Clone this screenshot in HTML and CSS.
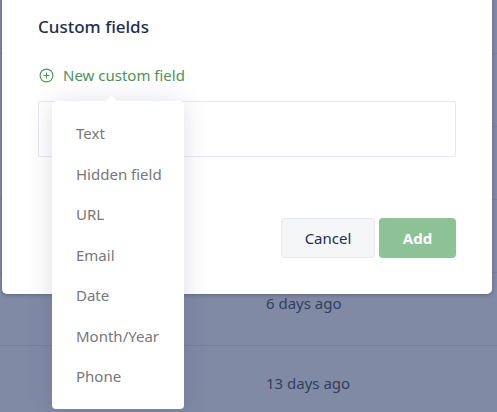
FILE: index.html
```html
<!DOCTYPE html>
<html lang="en">
<head>
    <meta charset="UTF-8">
    <meta name="viewport" content="width=device-width, initial-scale=1.0">
    <title>Custom fields</title>
    <link rel="stylesheet" href="styles.css">
</head>
<body>

    <!-- Table behind the overlay -->
    <div class="rows">
        <div class="row"></div>
        <div class="row"></div>
        <div class="row"></div>
        <div class="row"><span class="row-date first">6 days ago</span></div>
        <div class="row"><span class="row-date">13 days ago</span></div>
    </div>

    <div class="modal">
        <h2 class="modal-title">Custom fields</h2>
        <div class="new-field">
            <svg class="plus-icon" width="15" height="15" viewBox="0 0 15 15" fill="none" stroke="#4a9259" stroke-width="1.1">
                <circle cx="7.5" cy="7.5" r="6.4"/>
                <path d="M7.5 4.6v5.8M4.6 7.5h5.8"/>
            </svg>
            <span>New custom field</span>
        </div>
        <div class="fields-box"></div>
        <div class="modal-actions">
            <button class="btn btn-cancel">Cancel</button>
            <button class="btn btn-add">Add</button>
        </div>
    </div>

    <div class="dropdown">
        <div class="dropdown-item">Text</div>
        <div class="dropdown-item">Hidden field</div>
        <div class="dropdown-item">URL</div>
        <div class="dropdown-item">Email</div>
        <div class="dropdown-item">Date</div>
        <div class="dropdown-item">Month/Year</div>
        <div class="dropdown-item">Phone</div>
    </div>

</body>
</html>
```

FILE: styles.css
```css
html, body {
    height: 100%;
}

body {
    margin: 0;
    background: #808aa5;
    font-family: "Noto Sans", "Open Sans", Arial, sans-serif;
    overflow: hidden;
}

.rows {
    padding-top: 53px;
}

.row {
    height: 73px;
    border-top: 1px solid #747f9c;
    box-sizing: border-box;
    padding: 27px 0 0 266px;
    font-size: 15px;
    line-height: 20px;
    color: #323e5e;
}

.row-date.first {
    display: block;
    margin-top: -7px;
}

.modal {
    position: absolute;
    top: -10px;
    left: 2px;
    width: 490px;
    height: 304px;
    box-sizing: border-box;
    padding: 26px 36px 0 36px;
    background: #fff;
    border-radius: 5px;
    box-shadow: 0 1px 4px rgba(30, 40, 70, 0.35);
}

.modal-title {
    margin: 0;
    font-size: 17px;
    line-height: 22px;
    font-weight: 500;
    color: #1f2e50;
}

.new-field {
    display: flex;
    align-items: center;
    gap: 9px;
    margin-top: 27px;
    padding-left: 1px;
    font-size: 15px;
    line-height: 20px;
    color: #4a9259;
}

.fields-box {
    height: 54px;
    margin-top: 16px;
    border: 1px solid #e8e8f2;
    border-radius: 2px;
}

.modal-actions {
    display: flex;
    justify-content: flex-end;
    gap: 4px;
    margin-top: 61px;
}

.btn {
    height: 40px;
    box-sizing: border-box;
    border-radius: 4px;
    font-family: inherit;
    font-size: 15px;
}

.btn-cancel {
    width: 94px;
    background: #f5f6f7;
    border: 1px solid #e6e8ec;
    color: #1f2e50;
}

.btn-add {
    width: 77px;
    background: #8dc196;
    border: none;
    color: #fff;
    font-weight: 700;
}

.dropdown {
    position: absolute;
    top: 101px;
    left: 52px;
    width: 132px;
    height: 308px;
    box-sizing: border-box;
    padding-top: 12px;
    background: #fff;
    border-radius: 4px;
    box-shadow: 0 2px 24px rgba(40, 50, 90, 0.16);
}

.dropdown::before {
    content: "";
    position: absolute;
    top: -4px;
    left: 55px;
    width: 9px;
    height: 9px;
    background: #fff;
    transform: rotate(45deg);
}

.dropdown-item {
    position: relative;
    height: 40.5px;
    padding-left: 24px;
    font-size: 15px;
    line-height: 40.5px;
    color: #77777b;
}
```
